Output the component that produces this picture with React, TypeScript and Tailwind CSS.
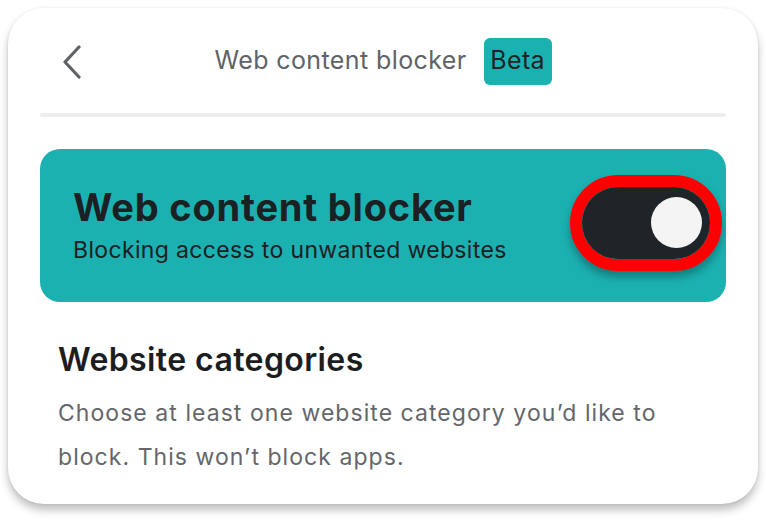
export default function App() {
  return (
    <div
      className="w-[766px] h-[524px] bg-white pt-2 px-2"
      style={{ fontFamily: "Inter, 'Noto Sans', sans-serif" }}
    >
      <div className="w-[750px] h-[496px] bg-white rounded-[36px] shadow-[0_6px_8px_rgba(0,0,0,0.25),0_0_3px_rgba(0,0,0,0.08)] px-8">
        {/* header */}
        <div className="relative h-[105px] flex items-center justify-center">
          <button className="absolute left-[22px] top-[37px] text-[#5f6368]">
            <svg width="20" height="34" viewBox="0 0 20 34" fill="none">
              <path
                d="M17 2 L3 17 L17 32"
                stroke="currentColor"
                strokeWidth="3.2"
                strokeLinecap="round"
                strokeLinejoin="round"
              />
            </svg>
          </button>
          <div className="flex items-center gap-[17px] pt-[1px]">
            <span className="text-[25px] text-[#5f6368] tracking-[0.4px]">
              Web content blocker
            </span>
            <span className="bg-[#1bb1b1] rounded-[6px] h-[47px] w-[68px] flex items-center justify-center text-[25px] tracking-[0.3px] text-[#1f2326]">
              Beta
            </span>
          </div>
        </div>
        <div className="h-[4px] bg-[#eeeeee] rounded-full" />

        {/* toggle card */}
        <div className="mt-8 h-[153px] bg-[#1bb1b1] rounded-[20px] pl-[33px] pr-[4px] flex items-center justify-between">
          <div className="flex flex-col gap-[6px] mt-[-2px]">
            <span className="text-[38px] font-bold leading-[44px] text-[#1b2023] tracking-[0.8px]">
              Web content blocker
            </span>
            <span className="text-[23px] leading-[30px] text-[#1b2023] tracking-[0.35px]">
              Blocking access to unwanted websites
            </span>
          </div>
          <div className="rounded-full border-[12px] border-[#ff0000] shadow-[0_6px_8px_rgba(0,0,0,0.3)] mt-[-6px]">
            <div className="w-[128px] h-[72px] bg-[#1f2428] rounded-full flex items-center justify-end pr-[8px]">
              <div className="w-[51px] h-[51px] rounded-full bg-[#f4f4f4]" />
            </div>
          </div>
        </div>

        {/* categories */}
        <div className="px-[18px] pt-[38px]">
          <div className="text-[32px] font-semibold leading-[40px] text-[#1b1d1f] tracking-[0.4px]">
            Website categories
          </div>
          <p className="mt-[11px] text-[23px] leading-[44px] text-[#63676b] tracking-[1.05px]">
            Choose at least one website category you’d like to block. This won’t
            block apps.
          </p>
        </div>
      </div>
    </div>
  );
}
